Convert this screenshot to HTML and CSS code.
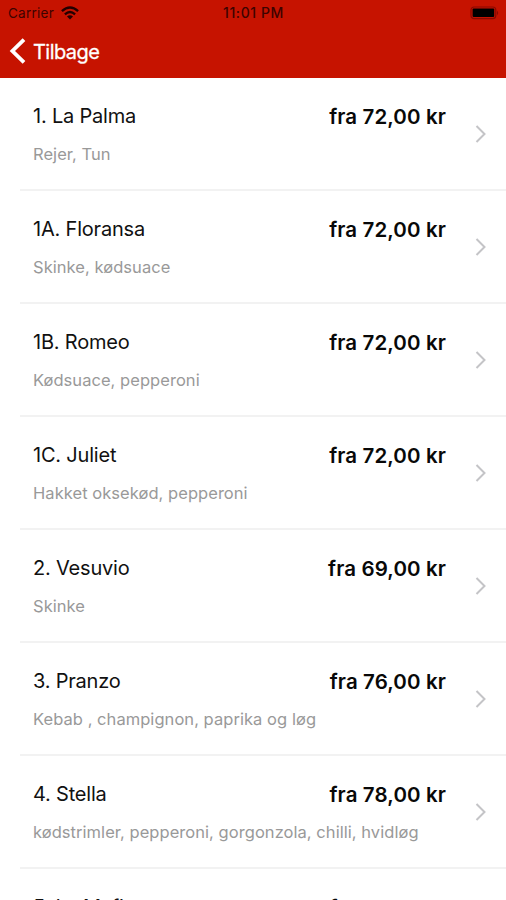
FILE: index.html
```html
<!DOCTYPE html>
<html lang="da">
<head>
<meta charset="utf-8">
<title>Menu</title>
<link rel="stylesheet" href="styles.css">
</head>
<body>
<div class="screen">
<header class="header">
  <div class="status">
    <div class="carrier"><span>Carrier</span>
      <svg class="wifi" width="18" height="14" viewBox="0 0 18 14"><g fill="none" stroke="#240000" stroke-width="2.3"><path d="M.9 5.2Q9-2.3 17.1 5.2"/><path d="M3.9 8.4Q9 3.7 14.1 8.4"/></g><path d="M6 10.6Q9 8 12 10.6L9 13.6Z" fill="#240000"/></svg>
    </div>
    <time class="time">11:01 PM</time>
    <svg class="battery" width="29" height="14" viewBox="0 0 29 14"><rect x="1" y="1" width="24.8" height="11.6" rx="3" fill="none" stroke="#8a0900" stroke-width="1.2"/><rect x="2.6" y="2.6" width="21.6" height="8.4" rx="1"/><path d="M27 4.8Q29.4 7 27 9.2Z" fill="#8a0900"/></svg>
  </div>
  <nav class="nav">
    <svg class="back" width="17" height="26" viewBox="0 0 17 26"><path d="M15 1.6 3.4 13 15 24.4" fill="none" stroke="#fff" stroke-width="3.8"/></svg>
    <span class="back-label">Tilbage</span>
  </nav>
</header>
<main class="list">
  <article class="row"><div class="line"><h2 class="name">1. La Palma</h2><span class="price">fra 72,00 kr</span></div><p class="desc">Rejer, Tun</p><svg class="chev" width="12" height="18" viewBox="0 0 12 18"><path d="M1.5 1 9.5 9 1.5 17"/></svg></article>
  <article class="row"><div class="line"><h2 class="name">1A. Floransa</h2><span class="price">fra 72,00 kr</span></div><p class="desc">Skinke, kødsuace</p><svg class="chev" width="12" height="18" viewBox="0 0 12 18"><path d="M1.5 1 9.5 9 1.5 17"/></svg></article>
  <article class="row"><div class="line"><h2 class="name">1B. Romeo</h2><span class="price">fra 72,00 kr</span></div><p class="desc">Kødsuace, pepperoni</p><svg class="chev" width="12" height="18" viewBox="0 0 12 18"><path d="M1.5 1 9.5 9 1.5 17"/></svg></article>
  <article class="row"><div class="line"><h2 class="name">1C. Juliet</h2><span class="price">fra 72,00 kr</span></div><p class="desc">Hakket oksekød, pepperoni</p><svg class="chev" width="12" height="18" viewBox="0 0 12 18"><path d="M1.5 1 9.5 9 1.5 17"/></svg></article>
  <article class="row"><div class="line"><h2 class="name">2. Vesuvio</h2><span class="price">fra 69,00 kr</span></div><p class="desc">Skinke</p><svg class="chev" width="12" height="18" viewBox="0 0 12 18"><path d="M1.5 1 9.5 9 1.5 17"/></svg></article>
  <article class="row"><div class="line"><h2 class="name">3. Pranzo</h2><span class="price">fra 76,00 kr</span></div><p class="desc">Kebab , champignon, paprika og løg</p><svg class="chev" width="12" height="18" viewBox="0 0 12 18"><path d="M1.5 1 9.5 9 1.5 17"/></svg></article>
  <article class="row"><div class="line"><h2 class="name">4. Stella</h2><span class="price">fra 78,00 kr</span></div><p class="desc">kødstrimler, pepperoni, gorgonzola, chilli, hvidløg</p><svg class="chev" width="12" height="18" viewBox="0 0 12 18"><path d="M1.5 1 9.5 9 1.5 17"/></svg></article>
  <article class="row"><div class="line"><h2 class="name">5. La Mafia</h2><span class="price">fra 78,00 kr</span></div></article>
</main>
</div>
</body>
</html>
```
FILE: styles.css
```css
* { box-sizing: border-box; }
body { margin: 0; font-family: Inter, "Liberation Sans", sans-serif; background: #fff; }
.screen { height: 900px; overflow: hidden; }
.header { height: 78px; background: #c61300; }
.status { height: 26px; padding: 0 7px 0 8px; display: grid; grid-template-columns: 1fr auto 1fr; align-items: center; color: #3d0300; font-size: 13.5px; line-height: 26px; }
.carrier { display: flex; align-items: center; gap: 7px; letter-spacing: .25px; }
.time { font-weight: 500; font-size: 14px; letter-spacing: .6px; }
.battery { justify-self: end; }
.nav { display: flex; align-items: center; height: 50px; padding-left: 9px; gap: 7px; }
.back-label { color: #fff; font-size: 20px; line-height: 24px; letter-spacing: -.55px; padding-top: 1px; -webkit-text-stroke: .3px #fff; }
.row { position: relative; height: 112.95px; margin-left: 20px; padding: 25.3px 60px 0 13px; border-bottom: 2px solid #f2f2f2; }
.row:first-child { height: 113.2px; }
.line { display: flex; justify-content: space-between; height: 26px; line-height: 26px; }
.name { margin: 0; font-weight: 400; font-size: 20px; letter-spacing: -.2px; color: #111; }
.price { font-weight: 600; font-size: 20.5px; letter-spacing: .12px; padding-top: 1px; color: #080808; white-space: nowrap; }
.desc { margin: 13px 0 0; font-size: 16.5px; line-height: 25px; letter-spacing: .05px; color: #999; white-space: nowrap; }
.chev { position: absolute; right: 19px; top: 47px; fill: none; stroke: #c4c4c7; stroke-width: 2; }
```
